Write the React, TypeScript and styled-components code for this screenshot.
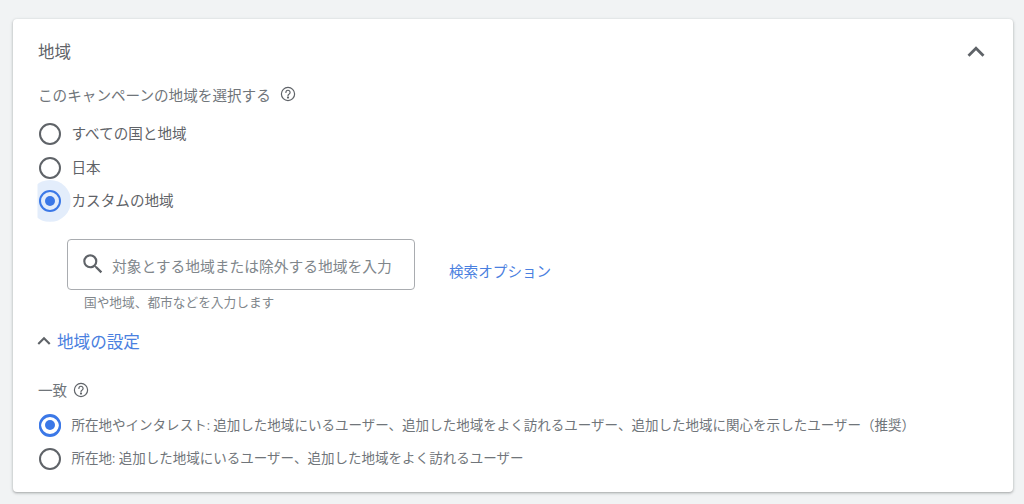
import React from "react";
import styled, { createGlobalStyle } from "styled-components";

const Global = createGlobalStyle`
  html, body { margin: 0; padding: 0; background: #f1f3f4; }
  body { font-family: "Roboto", "Noto Sans CJK JP", sans-serif; width: 1024px; height: 504px; overflow: hidden; }
`;

const Page = styled.div`
  padding: 19px 11px 0 13px;
`;

const Card = styled.section`
  height: 473px;
  box-sizing: border-box;
  background: #fff;
  border-radius: 4px;
  box-shadow: 0 1px 2px rgba(60, 64, 67, 0.3), 0 1px 3px 1px rgba(60, 64, 67, 0.12);
  padding: 20px 20px 0 25px;
  color: #5f6368;
`;

const Header = styled.header`
  display: flex;
  align-items: center;
  justify-content: space-between;
  height: 24px;
`;

const Title = styled.h2`
  margin: 0;
  font-size: 16.5px;
  font-weight: 400;
  color: #5f6368;
`;

const CollapseIcon = styled.span`
  display: flex;
  margin-top: 2px;
`;

const QuestionRow = styled.div<{ $top: number; $gap: number }>`
  display: flex;
  align-items: center;
  gap: ${(p) => p.$gap}px;
  margin-top: ${(p) => p.$top}px;
  height: 20px;
  font-size: 14.6px;
  color: #70757a;
`;

const RadioGroup = styled.div<{ $top: number }>`
  display: flex;
  flex-direction: column;
  margin-top: ${(p) => p.$top}px;
`;

const RadioRow = styled.label<{ $size: number; $height: number }>`
  display: flex;
  align-items: center;
  gap: 10.5px;
  height: ${(p) => p.$height}px;
  font-size: ${(p) => p.$size}px;
  color: ${(p) => (p.$size < 14 ? "#70757a" : "#5f6368")};
  white-space: nowrap;
`;

const RadioCircle = styled.span<{ $on?: boolean; $halo?: boolean }>`
  position: relative;
  flex: none;
  width: 22px;
  height: 22px;
  box-sizing: border-box;
  border-radius: 50%;
  margin: 3px 0 0 1px;
  border: 2.5px solid ${(p) => (p.$on ? "#3b78e7" : "#5f6368")};
  &::before {
    content: "";
    display: ${(p) => (p.$halo ? "block" : "none")};
    position: absolute;
    left: -12.5px;
    top: -12.5px;
    width: 42px;
    height: 42px;
    border-radius: 50%;
    background: #e3edfb;
    clip-path: inset(0 0 0 9px);
    z-index: 0;
  }
  &::after {
    content: "";
    display: ${(p) => (p.$on ? "block" : "none")};
    position: absolute;
    left: 3.5px;
    top: 3.5px;
    width: 10px;
    height: 10px;
    border-radius: 50%;
    background: #3b78e7;
  }
`;

const RadioFill = styled.span`
  position: absolute;
  left: -2.5px;
  top: -2.5px;
  width: 22px;
  height: 22px;
  box-sizing: border-box;
  border: 2.5px solid #3b78e7;
  border-radius: 50%;
  z-index: 1;
`;

const SearchArea = styled.div`
  display: flex;
  align-items: flex-start;
  gap: 34px;
  margin-top: 22px;
  margin-left: 29px;
`;

const SearchColumn = styled.div`
  display: flex;
  flex-direction: column;
`;

const SearchBox = styled.div`
  display: flex;
  align-items: center;
  width: 348px;
  height: 51px;
  box-sizing: border-box;
  border: 1px solid #a9acb0;
  border-radius: 4px;
  padding-left: 12px;
  gap: 6px;
  font-size: 14.75px;
  color: #80868b;
  white-space: nowrap;
`;

const Placeholder = styled.span`
  margin-top: 3px;
`;

const Hint = styled.div`
  font-size: 12.7px;
  color: #80868b;
  margin: 4px 0 0 17px;
  line-height: 17px;
`;

const SearchLink = styled.a`
  font-size: 14.6px;
  color: #4a80e0;
  margin-top: 22px;
  line-height: 22px;
`;

const Disclosure = styled.div`
  display: flex;
  align-items: center;
  margin-top: 18px;
  margin-left: -7px;
  height: 24px;
  font-size: 16.6px;
  color: #4a80e0;
`;

const Help = () => (
  <svg width="16" height="16" viewBox="0 0 16 16" fill="none" stroke="#5f6368" strokeWidth="1.2">
    <circle cx="8" cy="8" r="6.6" />
    <path d="M5.9 6.4a2.1 2.1 0 1 1 3.3 1.7c-.8.5-1.2.9-1.2 1.7" strokeLinecap="round" />
    <circle cx="8" cy="11.6" r=".5" fill="#5f6368" />
  </svg>
);

const Chevron = ({ size }: { size: number }) => (
  <svg width={size} height={size} viewBox="0 0 24 24" fill="#5f6368">
    <path d="M12 8l-6 6 1.41 1.41L12 10.83l4.59 4.58L18 14z" />
  </svg>
);

const Search = () => (
  <svg width="26" height="26" viewBox="0 0 24 24" fill="#5f6368">
    <path d="M15.5 14h-.79l-.28-.27A6.47 6.47 0 0 0 16 9.5 6.5 6.5 0 1 0 9.5 16c1.61 0 3.09-.59 4.23-1.57l.27.28v.79l5 4.99L20.49 19l-4.99-5zm-6 0C7.01 14 5 11.99 5 9.5S7.01 5 9.5 5 14 7.01 14 9.5 11.99 14 9.5 14z" />
  </svg>
);

const Radio = ({ on, halo }: { on?: boolean; halo?: boolean }) => (
  <RadioCircle $on={on} $halo={halo}>
    {on && <RadioFill />}
  </RadioCircle>
);

export default function App() {
  return (
    <Page>
      <Global />
      <Card>
        <Header>
          <Title>地域</Title>
          <CollapseIcon>
            <Chevron size={34} />
          </CollapseIcon>
        </Header>
        <QuestionRow $top={21} $gap={9}>
          このキャンペーンの地域を選択する
          <Help />
        </QuestionRow>
        <RadioGroup $top={12}>
          <RadioRow $size={14.6} $height={33.5}>
            <Radio />
            すべての国と地域
          </RadioRow>
          <RadioRow $size={14.6} $height={33.5}>
            <Radio />
            日本
          </RadioRow>
          <RadioRow $size={14.6} $height={33.5}>
            <Radio on halo />
            カスタムの地域
          </RadioRow>
        </RadioGroup>
        <SearchArea>
          <SearchColumn>
            <SearchBox>
              <Search />
              <Placeholder>対象とする地域または除外する地域を入力</Placeholder>
            </SearchBox>
            <Hint>国や地域、都市などを入力します</Hint>
          </SearchColumn>
          <SearchLink>検索オプション</SearchLink>
        </SearchArea>
        <Disclosure>
          <Chevron size={26} />
          地域の設定
        </Disclosure>
        <QuestionRow $top={27} $gap={6}>
          一致
          <Help />
        </QuestionRow>
        <RadioGroup $top={8}>
          <RadioRow $size={13.53} $height={33}>
            <Radio on />
            所在地やインタレスト: 追加した地域にいるユーザー、追加した地域をよく訪れるユーザー、追加した地域に関心を示したユーザー（推奨）
          </RadioRow>
          <RadioRow $size={13.53} $height={33}>
            <Radio />
            所在地: 追加した地域にいるユーザー、追加した地域をよく訪れるユーザー
          </RadioRow>
        </RadioGroup>
      </Card>
    </Page>
  );
}
